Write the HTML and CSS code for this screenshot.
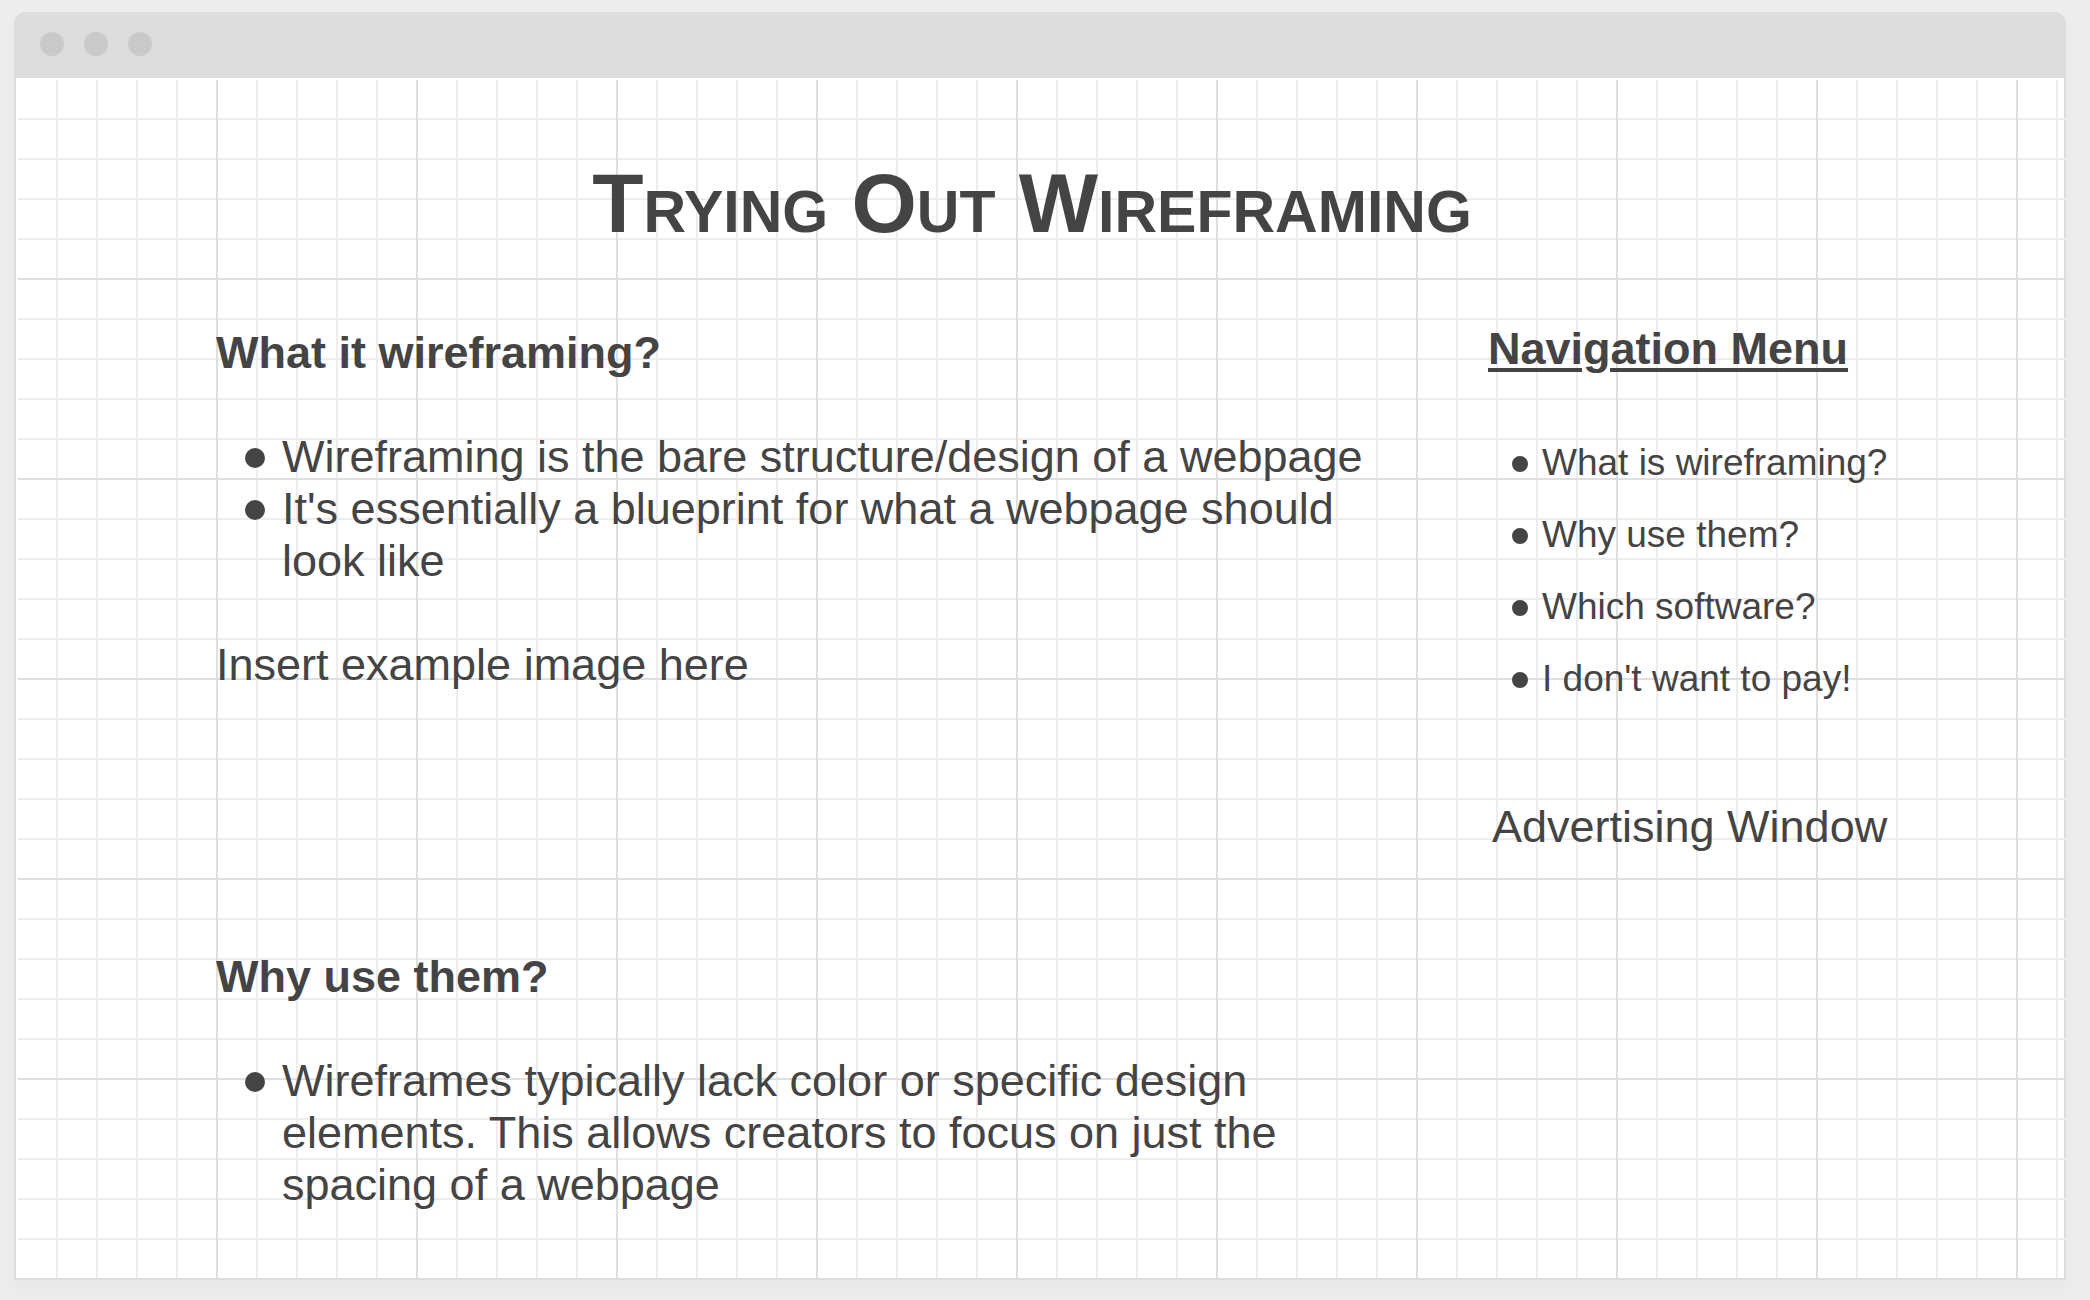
FILE: index.html
```html
<!DOCTYPE html>
<html lang="en">
<head>
<meta charset="utf-8">
<title>Trying Out Wireframing</title>
<link rel="stylesheet" href="styles.css">
</head>
<body>
<div class="window">
  <div class="titlebar">
    <span class="dot"></span>
    <span class="dot"></span>
    <span class="dot"></span>
  </div>
  <div class="canvas">
    <h1 class="title">Trying Out Wireframing</h1>
    <div class="columns">
      <main class="content">
        <section class="topic">
          <h2 class="heading">What it wireframing?</h2>
          <ul class="list">
            <li>Wireframing is the bare structure/design of a webpage</li>
            <li>It's essentially a blueprint for what a webpage should look like</li>
          </ul>
          <p class="note">Insert example image here</p>
        </section>
        <section class="topic">
          <h2 class="heading">Why use them?</h2>
          <ul class="list">
            <li>Wireframes typically lack color or specific design elements. This allows creators to focus on just the spacing of a webpage</li>
          </ul>
        </section>
      </main>
      <aside class="side">
        <nav>
          <h2 class="heading menu-heading">Navigation Menu</h2>
          <ul class="menu">
            <li>What is wireframing?</li>
            <li>Why use them?</li>
            <li>Which software?</li>
            <li>I don't want to pay!</li>
          </ul>
        </nav>
        <p class="advert">Advertising Window</p>
      </aside>
    </div>
  </div>
</div>
</body>
</html>
```

FILE: styles.css
```css
* {
  box-sizing: border-box;
}

body {
  margin: 0;
  padding: 12px 24px 20px 14px;
  min-height: 100vh;
  display: flex;
  background: #ededed;
  color: #444;
  font-family: "Liberation Sans", Arial, sans-serif;
  font-size: 45px;
  line-height: 52px;
}

h1, h2, p, ul {
  margin: 0;
  padding: 0;
}

ul {
  list-style: none;
}

.window {
  flex: 1;
  display: flex;
  flex-direction: column;
  border-radius: 12px 12px 0 0;
  background: #fff;
  border: 2px solid #ddd;
  border-top: 0;
  box-shadow: 0 8px 20px rgba(0, 0, 0, 0.03);
}

.titlebar {
  display: flex;
  align-items: center;
  gap: 20px;
  height: 66px;
  margin: 0 -2px;
  padding: 0 26px 2px;
  background: #ddd;
  border-radius: 12px 12px 0 0;
}

.dot {
  width: 24px;
  height: 24px;
  border-radius: 50%;
  background: #c9c9c9;
}

.canvas {
  flex: 1;
  margin: 2px -2px 0 2px;
  padding: 75px 160px 0 198px;
  background-image:
    linear-gradient(to right, transparent 198px, #dfdfdf 198px),
    linear-gradient(to bottom, transparent 198px, #dfdfdf 198px),
    linear-gradient(to right, transparent 38px, #ededed 38px),
    linear-gradient(to bottom, transparent 38px, #ededed 38px);
  background-size: 200px 200px, 200px 200px, 40px 40px, 40px 40px;
}

.title {
  padding-right: 58px;
  font-size: 84px;
  line-height: 96px;
  font-variant: small-caps;
  text-align: center;
}

.columns {
  display: flex;
  justify-content: space-between;
  padding-top: 72px;
}

.content {
  flex: 0 1 1160px;
  padding-top: 4px;
}

.heading {
  font-size: 45px;
  font-weight: bold;
}

.topic + .topic {
  padding-top: 260px;
}

.list {
  padding: 52px 0 52px 66px;
}

.topic:last-child .list {
  padding-bottom: 0;
}

.list li,
.menu li {
  position: relative;
}

.list li::before,
.menu li::before {
  content: "";
  position: absolute;
  border-radius: 50%;
  background: #444;
}

.list li::before {
  left: -37px;
  top: 17px;
  width: 20px;
  height: 20px;
}

.side {
  flex: 0 0 418px;
}

.menu-heading {
  text-decoration: underline 4px;
  text-underline-offset: 4px;
}

.menu {
  padding: 52px 0 50px 54px;
  font-size: 37px;
  line-height: 72px;
}

.menu li::before {
  left: -30px;
  top: 29px;
  width: 16px;
  height: 16px;
}

.advert {
  padding: 36px 0 0 4px;
}
```
